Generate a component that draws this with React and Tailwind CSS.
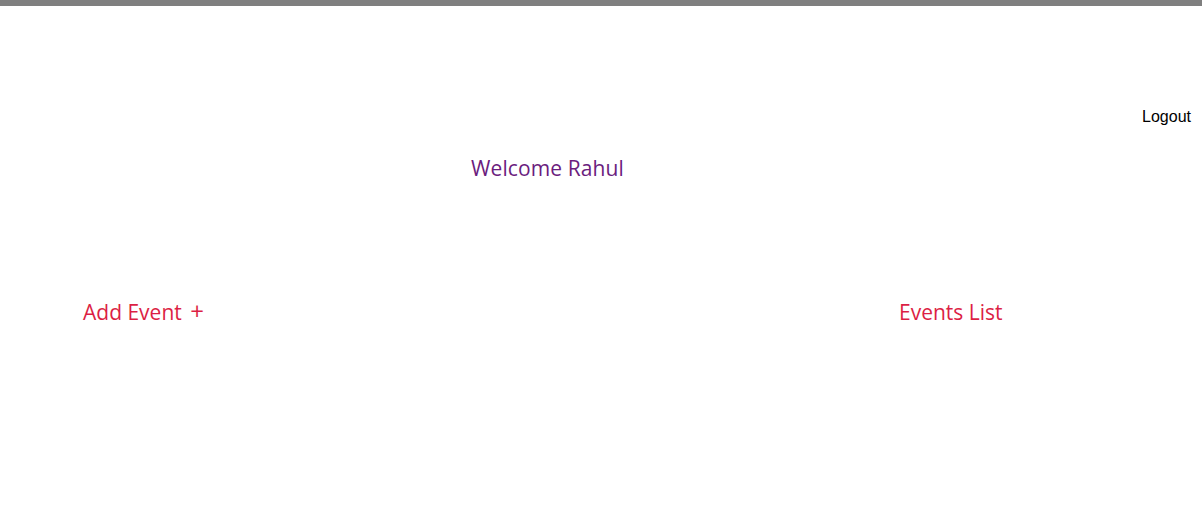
import React from 'react';

const App = () => {
  return (
    <div className="min-h-[510px] w-full bg-white">
      {/* top strip */}
      <div className="h-[6px] w-full bg-[#7f7f7f]" />

      {/* header with logout */}
      <div className="flex justify-end pt-[101px] pr-[11px]">
        <button className="font-['Liberation_Sans',Arial,sans-serif] text-[16px] leading-[20px] text-black">
          Logout
        </button>
      </div>

      {/* greeting */}
      <div className="flex pl-[471px] pt-[27px]">
        <h2 className="font-['Open_Sans',sans-serif] text-[21px] leading-[28px] tracking-[0.1px] text-[#6b1d7e]">
          Welcome Rahul
        </h2>
      </div>

      {/* actions */}
      <div className="flex pt-[116px] pl-[83px]">
        <div className="w-[816px]">
          <span className="font-['Open_Sans',sans-serif] text-[21px] leading-[28px] text-[#dc1f45]">
            Add Event <span className="ml-[3px] text-[24px] leading-[16px]">+</span>
          </span>
        </div>
        <div>
          <span className="font-['Open_Sans',sans-serif] text-[21px] leading-[28px] text-[#dc1f45]">
            Events List
          </span>
        </div>
      </div>
    </div>
  );
};

export default App;
